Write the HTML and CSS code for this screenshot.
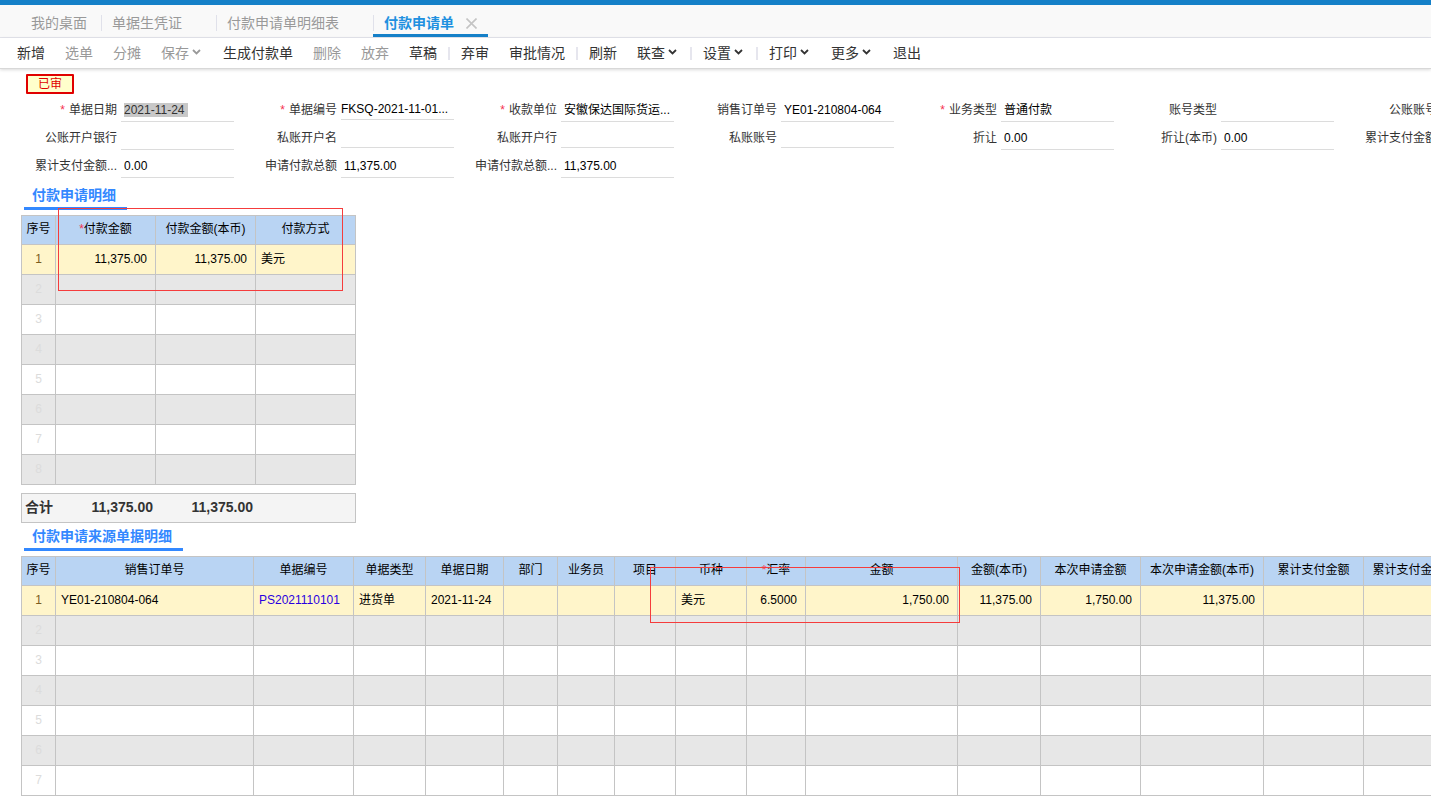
FILE: index.html
```
<!DOCTYPE html>
<html lang="zh-CN">
<head>
<meta charset="UTF-8">
<title>付款申请单</title>
<link rel="stylesheet" href="styles.css">
</head>
<body>
    <svg class="symbols" aria-hidden="true">
        <symbol id="arrow" viewBox="0 0 9 6">
            <path d="M1 1 L4.5 4.4 L8 1" fill="none" stroke="currentColor" stroke-width="1.8"/>
        </symbol>
    </svg>

    <nav class="tabs">
        <div class="tab first"><button>我的桌面</button></div>
        <div class="tab"><button>单据生凭证</button></div>
        <div class="tab"><button>付款申请单明细表</button></div>
        <div class="tab active">
            <button>付款申请单</button>
            <button class="close" aria-label="关闭">
                <svg width="11" height="11" viewBox="0 0 11 11"><path d="M0.5 0.5 L10.5 10.5 M10.5 0.5 L0.5 10.5" fill="none" stroke="#c4c4c4" stroke-width="1.6"/></svg>
            </button>
        </div>
    </nav>

    <div class="toolbar">
        <button>新增</button>
        <button disabled>选单</button>
        <button disabled>分摊</button>
        <button disabled>保存<svg class="arrow"><use href="#arrow"/></svg></button>
        <button>生成付款单</button>
        <button disabled>删除</button>
        <button disabled>放弃</button>
        <button>草稿</button>
        <span class="sep"></span>
        <button>弃审</button>
        <button>审批情况</button>
        <span class="sep"></span>
        <button>刷新</button>
        <button>联查<svg class="arrow"><use href="#arrow"/></svg></button>
        <span class="sep"></span>
        <button>设置<svg class="arrow"><use href="#arrow"/></svg></button>
        <span class="sep"></span>
        <button>打印<svg class="arrow"><use href="#arrow"/></svg></button>
        <button>更多<svg class="arrow"><use href="#arrow"/></svg></button>
        <button>退出</button>
    </div>

    <main class="content">
        <div class="status">已审</div>

        <form class="form">
            <div class="field">
                <label for="date"><i>*</i>单据日期</label>
                <div class="value"><input id="date" class="selected" value="2021-11-24"></div>
            </div>
            <div class="field">
                <label for="code"><i>*</i>单据编号</label>
                <div class="value code"><input id="code" value="FKSQ-2021-11-01..."></div>
            </div>
            <div class="field">
                <label for="payee"><i>*</i>收款单位</label>
                <div class="value"><input id="payee" value="安徽保达国际货运..."></div>
            </div>
            <div class="field">
                <label for="order">销售订单号</label>
                <div class="value"><input id="order" value="YE01-210804-064"></div>
            </div>
            <div class="field">
                <label for="biz"><i>*</i>业务类型</label>
                <div class="value"><input id="biz" value="普通付款"></div>
            </div>
            <div class="field">
                <label for="acc-type">账号类型</label>
                <div class="value"><input id="acc-type"></div>
            </div>
            <div class="field">
                <label for="pub-acc">公账账号</label>
                <div class="value"><input id="pub-acc"></div>
            </div>
            <div class="field">
                <label for="pub-bank">公账开户银行</label>
                <div class="value"><input id="pub-bank"></div>
            </div>
            <div class="field">
                <label for="pri-name">私账开户名</label>
                <div class="value code"><input id="pri-name"></div>
            </div>
            <div class="field">
                <label for="pri-bank">私账开户行</label>
                <div class="value code"><input id="pri-bank"></div>
            </div>
            <div class="field">
                <label for="pri-acc">私账账号</label>
                <div class="value code"><input id="pri-acc"></div>
            </div>
            <div class="field">
                <label for="discount">折让</label>
                <div class="value"><input id="discount" value="0.00"></div>
            </div>
            <div class="field">
                <label for="discount-local">折让(本币)</label>
                <div class="value"><input id="discount-local" value="0.00"></div>
            </div>
            <div class="field">
                <label for="paid">累计支付金额</label>
                <div class="value"><input id="paid"></div>
            </div>
            <div class="field">
                <label for="paid-local">累计支付金额...</label>
                <div class="value"><input id="paid-local" value="0.00"></div>
            </div>
            <div class="field">
                <label for="total">申请付款总额</label>
                <div class="value"><input id="total" value="11,375.00"></div>
            </div>
            <div class="field">
                <label for="total-local">申请付款总额...</label>
                <div class="value"><input id="total-local" value="11,375.00"></div>
            </div>
        </form>

        <section class="block">
            <h2>付款申请明细</h2>
            <table class="grid detail-grid">
                <colgroup>
                    <col class="w34"><col class="w100"><col class="w100"><col class="w100">
                </colgroup>
                <thead>
                    <tr><th>序号</th><th><i>*</i>付款金额</th><th>付款金额(本币)</th><th>付款方式</th></tr>
                </thead>
                <tbody data-rows="8">
                    <tr class="current"><td>1</td><td class="num">11,375.00</td><td class="num">11,375.00</td><td>美元</td></tr>
                </tbody>
            </table>
            <div class="sum">
                <span>合计</span>
                <span class="amount">11,375.00</span>
                <span class="amount">11,375.00</span>
            </div>
            <div class="mark mark-detail"></div>
        </section>

        <section class="block">
            <h2>付款申请来源单据明细</h2>
            <table class="grid source-grid">
                <colgroup>
                    <col class="w34"><col class="w198"><col class="w100"><col class="w72">
                    <col class="w78"><col class="w54"><col class="w57"><col class="w61">
                    <col class="w71"><col class="w59"><col class="w152"><col class="w83">
                    <col class="w100"><col class="w123"><col class="w100"><col class="w122">
                </colgroup>
                <thead>
                    <tr>
                        <th>序号</th><th>销售订单号</th><th>单据编号</th><th>单据类型</th>
                        <th>单据日期</th><th>部门</th><th>业务员</th><th>项目</th>
                        <th>币种</th><th><i>*</i>汇率</th><th>金额</th><th>金额(本币)</th>
                        <th>本次申请金额</th><th>本次申请金额(本币)</th><th>累计支付金额</th><th>累计支付金额(本币)</th>
                    </tr>
                </thead>
                <tbody data-rows="7">
                    <tr class="current">
                        <td>1</td><td>YE01-210804-064</td><td><a href="#">PS2021110101</a></td><td>进货单</td>
                        <td>2021-11-24</td><td></td><td></td><td></td>
                        <td>美元</td><td class="num">6.5000</td><td class="num">1,750.00</td><td class="num">11,375.00</td>
                        <td class="num">1,750.00</td><td class="num">11,375.00</td><td></td><td></td>
                    </tr>
                </tbody>
            </table>
            <div class="mark mark-source"></div>
        </section>
    </main>

    <script>
        // 用空行补足表格
        document.querySelectorAll('tbody[data-rows]').forEach(body => {
            const cols = body.rows[0].cells.length;
            const total = Number(body.dataset.rows);
            for (let i = body.rows.length + 1; i <= total; i++) {
                const row = body.insertRow();
                for (let c = 0; c < cols; c++) {
                    row.insertCell().textContent = c === 0 ? i : '';
                }
            }
        });
    </script>
</body>
</html>
```
FILE: styles.css
```
* {
    box-sizing: border-box;
}

body {
    margin: 0;
    border-top: 5px solid #1580c8;
    background-color: #fff;
    color: #333;
    font-family: "Liberation Sans", "Noto Sans CJK SC", sans-serif;
    font-size: 12px;
    line-height: 16px;
    overflow-x: hidden;
}

button,
input {
    margin: 0;
    padding: 0;
    border: none;
    background: none;
    color: inherit;
    font: inherit;
}

button {
    cursor: pointer;
}

i {
    color: #f5324f;
    font-style: normal;
}

.symbols {
    display: none;
}

/* 页签 */
.tabs {
    display: flex;
    height: 33px;
    padding-left: 20px;
    background-color: #f9f9f9;
    border-bottom: 1px solid #e4e5ec;
    color: #999;
    font-size: 14px;
}

.tab {
    display: flex;
    align-items: flex-end;
    padding: 0 34px 3px 0;
    border-bottom: 3px solid transparent;
}

.tab button:first-child {
    height: 16px;
    padding-left: 10px;
    border-left: 1px solid #e0e1ea;
    line-height: 16px;
    white-space: nowrap;
}

.tab.first {
    padding-right: 14px;
}

.tab.first button {
    border-left-color: transparent;
}

.tab.active {
    gap: 12px;
    padding-right: 11px;
    border-bottom-color: #1580c8;
    color: #2090e0;
    font-weight: bold;
}

.close {
    display: flex;
    align-items: center;
    height: 16px;
}

/* 工具栏 */
.toolbar {
    display: flex;
    align-items: center;
    height: 31px;
    padding-left: 7px;
    border-bottom: 1px solid #d8d8d8;
    box-shadow: 0 1px 3px rgba(0, 0, 0, 0.15);
    font-size: 14px;
}

.toolbar button {
    display: flex;
    align-items: center;
    padding: 0 10px;
    line-height: 20px;
    white-space: nowrap;
}

.toolbar button:disabled {
    color: #999;
    cursor: default;
}

.arrow {
    width: 9px;
    height: 6px;
    margin: 0 2px 2px 3px;
}

.sep {
    width: 2px;
    height: 13px;
    margin: 0 1px;
    background-color: #e6e6ee;
}

/* 单据头 */
.content {
    padding: 5px 0 14px 21px;
    overflow: hidden;
}

.status {
    width: 48px;
    margin-left: 5px;
    border: 2px solid #e00000;
    border-radius: 1px;
    background-color: #ffffcc;
    color: #e00000;
    text-align: center;
}

.form {
    display: grid;
    grid-template-columns: repeat(7, 201px);
    grid-auto-rows: 28px;
    column-gap: 19px;
    padding: 0 0 4px 12px;
}

.field {
    display: flex;
    align-items: flex-end;
    gap: 4px;
}

.field label {
    flex: 1;
    padding-bottom: 4px;
    text-align: right;
    white-space: nowrap;
}

.field label i {
    margin-right: 4px;
}

.value {
    display: flex;
    align-items: center;
    width: 113px;
    height: 23px;
    padding-left: 3px;
    border-bottom: 1px solid #dcdcdc;
    color: #000;
}

.value.code {
    height: 21px;
    padding-left: 0;
    margin-bottom: 2px;
}

.value input {
    width: 100%;
    height: 16px;
}

.value input.selected {
    width: 64px;
    height: 14px;
    background-color: #c8c8c8;
    color: #333;
}

/* 明细 */
.block {
    position: relative;
}

.block h2 {
    width: max-content;
    margin: 0 0 5px 3px;
    padding: 4px 11px 3px 8px;
    border-bottom: 3px solid #3388ff;
    color: #3388ff;
    font-size: 14px;
    line-height: 18px;
}

.grid {
    border-collapse: collapse;
    table-layout: fixed;
    color: #000;
}

.detail-grid {
    width: 335px;
}

.source-grid {
    width: 1465px;
}

.grid th,
.grid td {
    height: 30px;
    padding: 0 8px 2px 5px;
    border: 1px solid #c4c4c4;
    overflow: hidden;
    text-align: left;
    white-space: nowrap;
}

.grid th {
    height: 29px;
    padding: 0 0 2px;
    background-color: #b9d4f3;
    font-weight: normal;
    text-align: center;
}

.grid tr > :first-child {
    padding: 0 0 2px;
    text-align: center;
}

.grid tbody td:first-child {
    color: #dcdcdc;
}

.grid tbody tr:nth-child(even) {
    background-color: #e7e7e7;
}

.grid tbody .current {
    background-color: #fff5ca;
}

.grid tbody .current td:first-child {
    color: #7a5c1e;
}

.grid .num {
    text-align: right;
}

.grid a {
    color: #2a00e0;
    text-decoration: none;
}

.sum {
    display: grid;
    grid-template-columns: 30px 100px 100px;
    align-items: center;
    width: 335px;
    height: 30px;
    margin-top: 8px;
    padding: 0 0 2px 3px;
    border: 1px solid #c4c4c4;
    background-color: #f4f4f4;
    font-size: 14px;
    font-weight: bold;
}

.sum .amount {
    padding-right: 2px;
    text-align: right;
}

/* 红框标注 */
.mark {
    position: absolute;
    border: 1px solid #f53c3c;
    pointer-events: none;
}

.mark-detail {
    top: 26px;
    left: 37px;
    width: 285px;
    height: 83px;
}

.mark-source {
    top: 44px;
    left: 629px;
    width: 310px;
    height: 56px;
}

/* 列宽 */
.w34 { width: 34px; }
.w54 { width: 54px; }
.w57 { width: 57px; }
.w59 { width: 59px; }
.w61 { width: 61px; }
.w71 { width: 71px; }
.w72 { width: 72px; }
.w78 { width: 78px; }
.w83 { width: 83px; }
.w100 { width: 100px; }
.w122 { width: 122px; }
.w123 { width: 123px; }
.w152 { width: 152px; }
.w198 { width: 198px; }
```
